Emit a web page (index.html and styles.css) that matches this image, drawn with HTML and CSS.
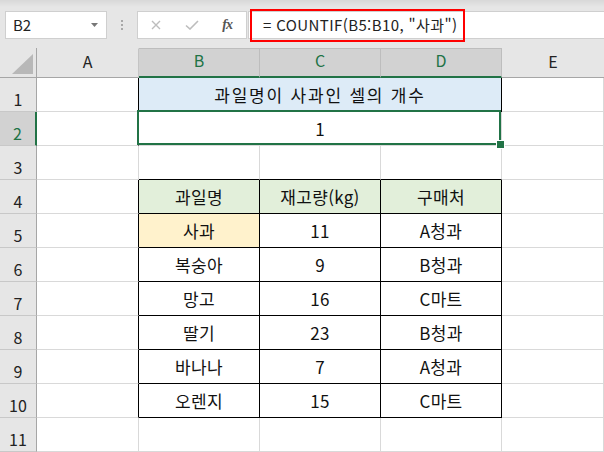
FILE: index.html
```html
<!DOCTYPE html>
<html lang="ko">
<head>
<meta charset="utf-8">
<title>COUNTIF</title>
<link rel="stylesheet" href="styles.css">
</head>
<body>
<div class="app">
  <div class="topbar">
    <div class="namebox">
      <span class="nb-text">B2</span>
      <svg class="nb-arrow" width="7" height="4" viewBox="0 0 7 4"><path d="M0 0H7L3.5 4Z" fill="#777"/></svg>
    </div>
    <div class="grip"><i></i><i></i><i></i></div>
    <div class="fxbox">
      <span class="fx-slot"><svg width="10" height="10" viewBox="0 0 10 10"><path d="M1 1L9 9M9 1L1 9" stroke="#bdbdbd" stroke-width="1.4" fill="none"/></svg></span>
      <span class="fx-slot"><svg width="14" height="10" viewBox="0 0 14 10"><path d="M1 5.5L5 9L13 1" stroke="#bdbdbd" stroke-width="1.6" fill="none"/></svg></span>
      <span class="fx-slot fx">fx</span>
    </div>
    <div class="formula">
      <div class="hl">= COUNTIF(B5:B10, "사과")</div>
    </div>
  </div>

  <div class="sheet">
    <div class="corner"><svg width="21" height="20" viewBox="0 0 21 20"><path d="M21 0V20H0Z" fill="#b8b8b8"/></svg></div>
    <div class="ch">A</div>
    <div class="ch sel">B</div>
    <div class="ch sel">C</div>
    <div class="ch sel">D</div>
    <div class="ch last">E</div>

    <div class="rh">1</div>
    <div class="c bl-r"></div>
    <div class="c m3 title">과일명이 사과인 셀의 개수</div>
    <div class="c"></div>

    <div class="rh sel">2</div>
    <div class="c bl-r"></div>
    <div class="c m3 active">1</div>
    <div class="c"></div>

    <div class="rh">3</div>
    <div class="c"></div>
    <div class="c bl-b"></div>
    <div class="c bl-b"></div>
    <div class="c bl-b"></div>
    <div class="c"></div>

    <div class="rh">4</div>
    <div class="c bl-r"></div>
    <div class="c t th">과일명</div>
    <div class="c t th">재고량(kg)</div>
    <div class="c t th">구매처</div>
    <div class="c"></div>

    <div class="rh">5</div>
    <div class="c bl-r"></div>
    <div class="c t hit">사과</div>
    <div class="c t">11</div>
    <div class="c t">A청과</div>
    <div class="c"></div>

    <div class="rh">6</div>
    <div class="c bl-r"></div>
    <div class="c t">복숭아</div>
    <div class="c t">9</div>
    <div class="c t">B청과</div>
    <div class="c"></div>

    <div class="rh">7</div>
    <div class="c bl-r"></div>
    <div class="c t">망고</div>
    <div class="c t">16</div>
    <div class="c t">C마트</div>
    <div class="c"></div>

    <div class="rh">8</div>
    <div class="c bl-r"></div>
    <div class="c t">딸기</div>
    <div class="c t">23</div>
    <div class="c t">B청과</div>
    <div class="c"></div>

    <div class="rh">9</div>
    <div class="c bl-r"></div>
    <div class="c t">바나나</div>
    <div class="c t">7</div>
    <div class="c t">A청과</div>
    <div class="c"></div>

    <div class="rh">10</div>
    <div class="c bl-r"></div>
    <div class="c t">오렌지</div>
    <div class="c t">15</div>
    <div class="c t">C마트</div>
    <div class="c"></div>

    <div class="rh">11</div>
    <div class="c"></div>
    <div class="c"></div>
    <div class="c"></div>
    <div class="c"></div>
    <div class="c"></div>
  </div>
</div>
</body>
</html>
```
FILE: styles.css
```css
* { box-sizing: border-box; }
html, body { margin: 0; padding: 0; }
body {
  width: 604px;
  height: 452px;
  overflow: hidden;
  background: #ffffff;
  font-family: "Noto Sans CJK KR", "Noto Sans", sans-serif;
  color: #111;
}
.app { display: flex; flex-direction: column; width: 604px; height: 452px; }

/* ---------- formula bar ---------- */
.topbar {
  height: 48px;
  flex: none;
  display: flex;
  align-items: flex-start;
  padding-top: 11px;
  background: linear-gradient(#d8d8d8, #e6e6e6 7px);
}
.namebox {
  margin-left: 5px;
  width: 102px;
  height: 28px;
  background: #fff;
  border: 1px solid #cfcfcf;
  display: flex;
  align-items: center;
  justify-content: space-between;
  padding: 0 8px 1px 7px;
}
.nb-text { font-size: 15px; color: #222; }
.nb-arrow { margin-top: 1px; }
.grip {
  margin-left: 14px;
  margin-top: 9px;
  width: 2px;
  display: flex;
  flex-direction: column;
  gap: 2px;
}
.grip i { display: block; width: 2px; height: 2px; background: #a8a8a8; }
.fxbox {
  margin-left: 14px;
  width: 110px;
  height: 28px;
  background: #fff;
  border: 1px solid #cfcfcf;
  display: flex;
}
.fx-slot {
  flex: 1;
  display: flex;
  align-items: center;
  justify-content: center;
}
.fx {
  font-family: "Liberation Serif", "DejaVu Serif", serif;
  font-style: italic;
  font-weight: bold;
  font-size: 14px;
  color: #555;
  letter-spacing: -1px;
  padding-right: 1px;
}
.formula {
  flex: 1;
  margin-left: 1px;
  height: 28px;
  background: #fff;
  border: 1px solid #cfcfcf;
  border-right: none;
  display: flex;
  align-items: center;
}
.hl {
  flex: none;
  margin-left: 1px;
  width: 215px;
  height: 33px;
  border: 2px solid #ff0000;
  display: flex;
  align-items: center;
  padding-left: 11px;
  padding-bottom: 1px;
  font-size: 15px;
  letter-spacing: 0.4px;
  color: #222;
  white-space: nowrap;
}

/* ---------- grid ---------- */
.sheet {
  flex: 1;
  display: grid;
  grid-template-columns: 37px 102px 121px 121px 121px 1fr;
  grid-template-rows: 30px repeat(11, 34px);
}
.corner {
  background: #e6e6e6;
  border-right: 1px solid #a6a6a6;
  border-bottom: 1px solid #a6a6a6;
  display: flex;
  align-items: flex-end;
  justify-content: flex-end;
  padding: 0 3px 3px 0;
}
.ch {
  background: #e6e6e6;
  border-right: 1px solid #c4c4c4;
  border-bottom: 1px solid #a6a6a6;
  border-top: 1px solid #e6e6e6;
  display: flex;
  align-items: center;
  justify-content: center;
  padding-bottom: 5px;
  font-size: 16px;
  color: #222;
}
.ch.sel {
  background: #d2d2d2;
  color: #217346;
  border-top-color: #bdbdbd;
  border-bottom: 2px solid #217346;
  border-right-color: #bdbdbd;
}
.ch.last { border-right: none; }
.rh {
  background: #e6e6e6;
  border-right: 1px solid #a6a6a6;
  border-bottom: 1px solid #c8c8c8;
  display: flex;
  align-items: center;
  justify-content: center;
  padding-top: 8px;
  font-size: 16px;
  color: #222;
}
.rh.sel {
  background: #d2d2d2;
  color: #217346;
  border-right: 2px solid #217346;
}
.c {
  border-right: 1px solid #d9d9d9;
  border-bottom: 1px solid #d9d9d9;
  display: flex;
  align-items: center;
  justify-content: center;
  font-size: 17px;
  letter-spacing: 0.3px;
  color: #111;
  white-space: nowrap;
}
.m3 { grid-column: span 3; }
.bl-r { border-right-color: #000; }
.bl-b { border-bottom-color: #000; }
.t { border-right-color: #000; border-bottom-color: #000; }
.th { background: #e2efda; }
.hit { background: #fff2cc; }
.title {
  background: #ddebf7;
  border-right-color: #000;
  border-bottom-color: #000;
  letter-spacing: 1.8px;
  word-spacing: 0;
}
.active { position: relative; }
.active::before {
  content: "";
  position: absolute;
  top: -2px;
  left: -2px;
  right: 0;
  bottom: 0;
  border: 2px solid #217346;
}
.active::after {
  content: "";
  position: absolute;
  right: -4px;
  bottom: -4px;
  width: 7px;
  height: 7px;
  background: #217346;
  border: 1px solid #ffffff;
  z-index: 2;
}
```
